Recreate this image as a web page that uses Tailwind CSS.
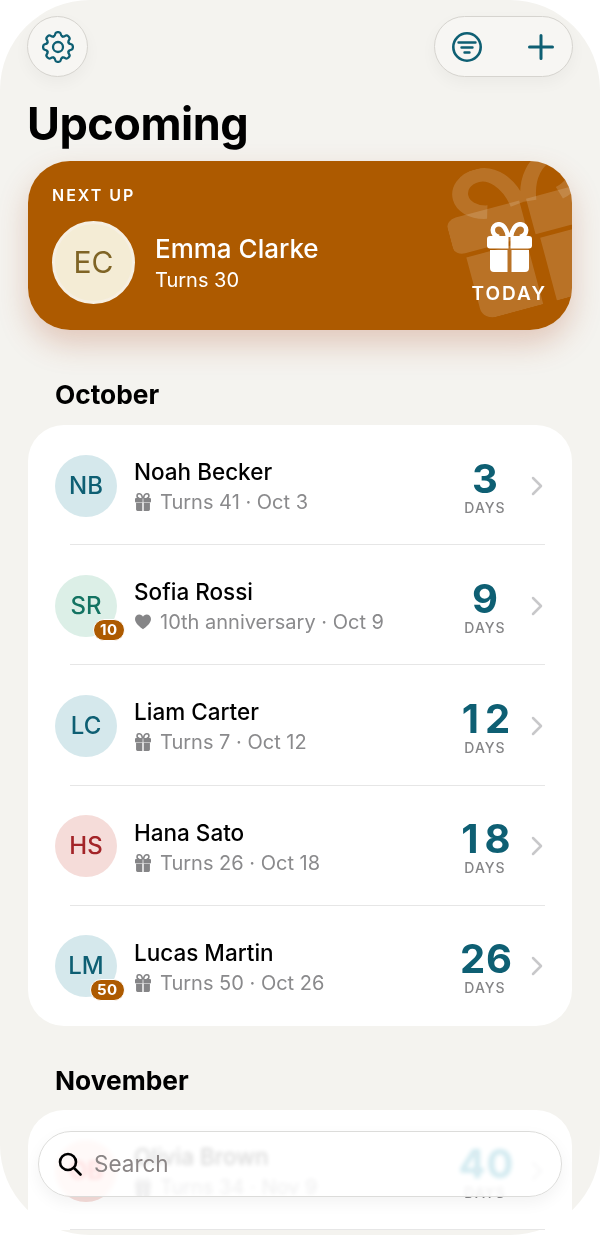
<!DOCTYPE html>
<html lang="en">
<head>
    <meta charset="UTF-8">
    <meta name="viewport" content="width=device-width, initial-scale=1">
    <title>Upcoming</title>
    <script src="https://cdn.jsdelivr.net/npm/@tailwindcss/browser@4"></script>
</head>
<body class="relative h-[1235px] w-[600px] overflow-hidden bg-white font-['Inter',sans-serif] text-black">

    <svg class="hidden">
        <symbol id="gift" viewBox="0 0 45 50" preserveAspectRatio="none">
            <path d="M21 15C20 7 16 2.200 12 2.200C8 2.200 5.800 5 5.800 8C5.800 11 8 14 12 15M24 15C25 7 29 2.200 33 2.200C37 2.200 39.200 5 39.200 8C39.200 11 37 14 33 15" fill="none" stroke="currentColor" stroke-width="4.500"/>
            <path d="M3 14H21.500V26.500H3A3 3 0 0 1 0 23.500V17A3 3 0 0 1 3 14ZM23.500 14H42A3 3 0 0 1 45 17V23.500A3 3 0 0 1 42 26.500H23.500ZM3 28H20.500V50H7A4 4 0 0 1 3 46ZM24.500 28H42V46A4 4 0 0 1 38 50H24.500Z" fill="currentColor"/>
        </symbol>
        <symbol id="heart" viewBox="0 0 24 24">
            <path d="M12 23C9 20.500 0 14.500 0 7.500C0 3.500 3 .8 6.500 .8C9 .8 11 2.200 12 4.200C13 2.200 15 .8 17.500 .8C21 .8 24 3.500 24 7.500C24 14.500 15 20.500 12 23Z" fill="currentColor"/>
        </symbol>
        <symbol id="chevron" viewBox="0 0 12 20">
            <path d="M2 2L10 10L2 18" fill="none" stroke="currentColor" stroke-width="2.500" stroke-linecap="round" stroke-linejoin="round"/>
        </symbol>
    </svg>

    <!-- Screen -->
    <div class="h-[1235px] w-[600px] rounded-[90px] bg-[#f4f3ef]">

        <!-- Top buttons -->
        <div class="flex justify-between pl-[27px] pr-[27px] pt-4">
            <button class="flex h-[61px] w-[61px] items-center justify-center rounded-full border border-[#d6d4cf] bg-[#f7f6f3] shadow-[0_6px_16px_rgba(0,0,0,0.04)]">
                <svg class="h-8 w-8 text-[#0e5f73]" viewBox="-16 -16 32 32" fill="none" stroke="currentColor" stroke-width="2.300" stroke-linecap="round" stroke-linejoin="round">
                    <circle r="5"/>
                    <path id="tooth" d="M-4.400-10.600Q-3-11-2.800-13Q-2.600-14.900 0-14.900Q2.600-14.900 2.800-13Q3-11 4.400-10.600"/>
                    <use href="#tooth" transform="rotate(45)"/>
                    <use href="#tooth" transform="rotate(90)"/>
                    <use href="#tooth" transform="rotate(135)"/>
                    <use href="#tooth" transform="rotate(180)"/>
                    <use href="#tooth" transform="rotate(225)"/>
                    <use href="#tooth" transform="rotate(270)"/>
                    <use href="#tooth" transform="rotate(315)"/>
                </svg>
            </button>
            <div class="flex h-[61px] w-[139px] items-center justify-between rounded-full border border-[#d6d4cf] bg-[#f7f6f3] pl-[16px] pr-[18px] shadow-[0_6px_16px_rgba(0,0,0,0.04)]">
                <svg class="h-[32px] w-[32px] text-[#0e5f73]" viewBox="0 0 32 32" fill="none" stroke="currentColor" stroke-linecap="round">
                    <circle cx="16" cy="16" r="13.700" stroke-width="2.600"/>
                    <path d="M7.500 11.500H24.500M10.500 16.500H21.500M13.500 21.500H18.500" stroke-width="2.400"/>
                </svg>
                <svg class="h-[26px] w-[26px] text-[#0e5f73]" viewBox="0 0 26 26" fill="none" stroke="currentColor" stroke-width="3" stroke-linecap="round">
                    <path d="M13 1.500V24.500M1.500 13H24.500"/>
                </svg>
            </div>
        </div>

        <h1 class="ml-[27px] mt-[20px] text-[45px] font-bold leading-[54px] tracking-[-0.5px]">Upcoming</h1>

        <!-- Next up -->
        <div class="mx-7 mt-[10px] h-[169px] rounded-[42px] shadow-[0_14px_30px_rgba(173,70,30,0.25)]">
            <div class="relative h-full overflow-hidden rounded-[42px] bg-[#ad5a00] text-white">
                <svg class="absolute left-[423px] top-[-4px] h-[148px] w-[160px] rotate-[-15deg] text-white/15"><use href="#gift"/></svg>
                <div class="relative flex h-full justify-between pl-6 pr-[25px]">
                    <div>
                        <div class="mt-[24px] text-[16px] font-semibold leading-[20px] tracking-[2px]">NEXT UP</div>
                        <div class="mt-[16px] flex items-center gap-5">
                            <div class="flex h-[83px] w-[83px] items-center justify-center rounded-full border-[3px] border-[#f6efe2] bg-[#f4ecd5] text-[30px] text-[#7f6425]">EC</div>
                            <div>
                                <div class="text-[26px] font-medium leading-[32px]">Emma Clarke</div>
                                <div class="mt-[2px] text-[20px] leading-[26px]">Turns 30</div>
                            </div>
                        </div>
                    </div>
                    <div class="flex flex-col items-center pt-[61px]">
                        <svg class="h-[50px] w-[45px]"><use href="#gift"/></svg>
                        <div class="mt-[10px] text-[19px] font-semibold leading-[24px] tracking-[2px]">TODAY</div>
                    </div>
                </div>
            </div>
        </div>

        <h2 class="ml-[55px] mt-[48px] text-[26.300px] font-[650] leading-[34px]">October</h2>

        <div class="mx-7 mt-[13px] rounded-[36px] bg-white pb-[1px]">
            <!-- Noah -->
            <div class="flex h-[119.200px] items-center pl-[27px] pr-[29px] pt-[2px]">
                <div class="flex h-[62px] w-[62px] items-center justify-center rounded-full bg-[#d5e8ec] text-[24px] font-[450] text-[#0e5f73]">NB</div>
                <div class="ml-[17px] flex-1 pt-[2px]">
                    <div class="text-[22.500px] font-medium leading-[28px]">Noah Becker</div>
                    <div class="mt-[3px] flex items-center gap-[9px] pl-[1px] text-[20px] leading-[26px] text-[#8a8a8c]"><svg class="h-[18px] w-[16px] text-[#858587]"><use href="#gift"/></svg>Turns 41 · Oct 3</div>
                </div>
                <div class="w-[72px] pt-[3px] text-center">
                    <div class="pl-[2px] text-[40px] font-bold leading-[40px] tracking-[2px] text-[#0e5f73]">3</div>
                    <div class="mt-[1px] text-[14px] font-medium leading-[16px] tracking-[1px] text-[#858587]">DAYS</div>
                </div>
                <svg class="ml-[10px] h-5 w-3 text-[#c8c8ca]"><use href="#chevron"/></svg>
            </div>
            <div class="ml-[42px] mr-[27px] h-px bg-[#e6e6e6]"></div>
            <!-- Sofia -->
            <div class="flex h-[119.200px] items-center pl-[27px] pr-[29px] pt-[2px]">
                <div class="relative flex h-[62px] w-[62px] items-center justify-center rounded-full bg-[#dcefe7] text-[24px] font-[450] text-[#137362]">SR
                    <span class="absolute left-[38px] top-[44px] rounded-full border border-white bg-[#ad5a00] px-[6px] text-[15px] font-bold leading-[20px] tracking-[0.5px] text-white">10</span>
                </div>
                <div class="ml-[17px] flex-1 pt-[2px]">
                    <div class="text-[22.500px] font-medium leading-[28px]">Sofia Rossi</div>
                    <div class="mt-[3px] flex items-center gap-[9px] pl-[1px] text-[20px] leading-[26px] text-[#8a8a8c]"><svg class="h-[16px] w-[16px] text-[#858587]"><use href="#heart"/></svg>10th anniversary · Oct 9</div>
                </div>
                <div class="w-[72px] pt-[3px] text-center">
                    <div class="pl-[2px] text-[40px] font-bold leading-[40px] tracking-[2px] text-[#0e5f73]">9</div>
                    <div class="mt-[1px] text-[14px] font-medium leading-[16px] tracking-[1px] text-[#858587]">DAYS</div>
                </div>
                <svg class="ml-[10px] h-5 w-3 text-[#c8c8ca]"><use href="#chevron"/></svg>
            </div>
            <div class="ml-[42px] mr-[27px] h-px bg-[#e6e6e6]"></div>
            <!-- Liam -->
            <div class="flex h-[119.200px] items-center pl-[27px] pr-[29px] pt-[2px]">
                <div class="flex h-[62px] w-[62px] items-center justify-center rounded-full bg-[#d5e8ec] text-[24px] font-[450] text-[#0e5f73]">LC</div>
                <div class="ml-[17px] flex-1 pt-[2px]">
                    <div class="text-[22.500px] font-medium leading-[28px]">Liam Carter</div>
                    <div class="mt-[3px] flex items-center gap-[9px] pl-[1px] text-[20px] leading-[26px] text-[#8a8a8c]"><svg class="h-[18px] w-[16px] text-[#858587]"><use href="#gift"/></svg>Turns 7 · Oct 12</div>
                </div>
                <div class="w-[72px] pt-[3px] text-center">
                    <div class="pl-[8px] text-[40px] font-bold leading-[40px] tracking-[6px] text-[#0e5f73]">12</div>
                    <div class="mt-[1px] text-[14px] font-medium leading-[16px] tracking-[1px] text-[#858587]">DAYS</div>
                </div>
                <svg class="ml-[10px] h-5 w-3 text-[#c8c8ca]"><use href="#chevron"/></svg>
            </div>
            <div class="ml-[42px] mr-[27px] h-px bg-[#e6e6e6]"></div>
            <!-- Hana -->
            <div class="flex h-[119.200px] items-center pl-[27px] pr-[29px] pt-[2px]">
                <div class="flex h-[62px] w-[62px] items-center justify-center rounded-full bg-[#f5dcd9] text-[24px] font-[450] text-[#a32428]">HS</div>
                <div class="ml-[17px] flex-1 pt-[2px]">
                    <div class="text-[22.500px] font-medium leading-[28px]">Hana Sato</div>
                    <div class="mt-[3px] flex items-center gap-[9px] pl-[1px] text-[20px] leading-[26px] text-[#8a8a8c]"><svg class="h-[18px] w-[16px] text-[#858587]"><use href="#gift"/></svg>Turns 26 · Oct 18</div>
                </div>
                <div class="w-[72px] pt-[3px] text-center">
                    <div class="pl-[8px] text-[40px] font-bold leading-[40px] tracking-[6px] text-[#0e5f73]">18</div>
                    <div class="mt-[1px] text-[14px] font-medium leading-[16px] tracking-[1px] text-[#858587]">DAYS</div>
                </div>
                <svg class="ml-[10px] h-5 w-3 text-[#c8c8ca]"><use href="#chevron"/></svg>
            </div>
            <div class="ml-[42px] mr-[27px] h-px bg-[#e6e6e6]"></div>
            <!-- Lucas -->
            <div class="flex h-[119.200px] items-center pl-[27px] pr-[29px] pt-[2px]">
                <div class="relative flex h-[62px] w-[62px] items-center justify-center rounded-full bg-[#d5e8ec] text-[24px] font-[450] text-[#0e5f73]">LM
                    <span class="absolute left-[35px] top-[44px] rounded-full border border-white bg-[#ad5a00] px-[6px] text-[15px] font-bold leading-[20px] tracking-[0.5px] text-white">50</span>
                </div>
                <div class="ml-[17px] flex-1 pt-[2px]">
                    <div class="text-[22.500px] font-medium leading-[28px]">Lucas Martin</div>
                    <div class="mt-[3px] flex items-center gap-[9px] pl-[1px] text-[20px] leading-[26px] text-[#8a8a8c]"><svg class="h-[18px] w-[16px] text-[#858587]"><use href="#gift"/></svg>Turns 50 · Oct 26</div>
                </div>
                <div class="w-[72px] pt-[3px] text-center">
                    <div class="pl-[3px] text-[40px] font-bold leading-[40px] tracking-[1px] text-[#0e5f73]">26</div>
                    <div class="mt-[1px] text-[14px] font-medium leading-[16px] tracking-[1px] text-[#858587]">DAYS</div>
                </div>
                <svg class="ml-[10px] h-5 w-3 text-[#c8c8ca]"><use href="#chevron"/></svg>
            </div>
        </div>

        <h2 class="ml-[55px] mt-[38px] text-[26.300px] font-[650] leading-[34px]">November</h2>

        <div class="mx-7 mt-[12px] rounded-t-[36px] bg-white">
            <!-- Olivia -->
            <div class="flex h-[119.200px] items-center pl-[27px] pr-[29px] pt-[2px]">
                <div class="flex h-[62px] w-[62px] items-center justify-center rounded-full bg-[#f5dcd9] text-[24px] font-[450] text-[#a32428]">OB</div>
                <div class="ml-[17px] flex-1 pt-[2px]">
                    <div class="text-[22.500px] font-medium leading-[28px]">Olivia Brown</div>
                    <div class="mt-[3px] flex items-center gap-[9px] pl-[1px] text-[20px] leading-[26px] text-[#8a8a8c]"><svg class="h-[18px] w-[16px] text-[#858587]"><use href="#gift"/></svg>Turns 34 · Nov 9</div>
                </div>
                <div class="w-[72px] pt-[3px] text-center">
                    <div class="pl-[3px] text-[40px] font-bold leading-[40px] tracking-[1px] text-[#0e5f73]">40</div>
                    <div class="mt-[1px] text-[14px] font-medium leading-[16px] tracking-[1px] text-[#858587]">DAYS</div>
                </div>
                <svg class="ml-[10px] h-5 w-3 text-[#c8c8ca]"><use href="#chevron"/></svg>
            </div>
            <div class="ml-[42px] mr-[27px] h-px bg-[#e6e6e6]"></div>
        </div>
    </div>

    <!-- Floating search -->
    <div class="absolute left-[38px] top-[1131px] flex h-[66px] w-[524px] items-center gap-[12px] rounded-full border border-[#dcdcda] bg-white/85 pl-[19px] shadow-[0_6px_16px_rgba(0,0,0,0.05)] backdrop-blur-[2px] backdrop-saturate-200">
        <svg class="h-[24px] w-[24px]" viewBox="0 0 24 24" fill="none" stroke="black" stroke-width="2.600" stroke-linecap="round">
            <circle cx="10" cy="10" r="8"/>
            <path d="M16 16L22.500 22.500"/>
        </svg>
        <span class="text-[22.500px] text-[#8a8585]">Search</span>
    </div>

</body>
</html>
